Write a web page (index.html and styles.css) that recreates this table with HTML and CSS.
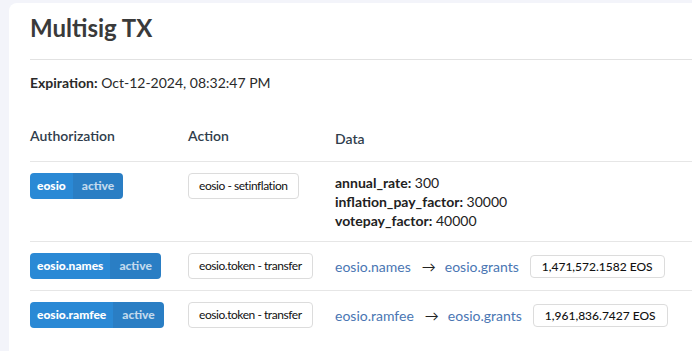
FILE: index.html
```html
<!DOCTYPE html>
<html>
<head>
<meta charset="utf-8">
<link rel="stylesheet" href="styles.css">
</head>
<body>
<div class="card">
  <div class="head">
    <h1 class="title">Multisig TX</h1>
  </div>
  <div class="expiration"><span class="label">Expiration:</span> Oct-12-2024, 08:32:47 PM</div>
  <div class="table">
    <div class="row header-row">
      <div class="th">Authorization</div>
      <div class="th">Action</div>
      <div class="th th-data">Data</div>
    </div>
    <div class="row">
      <div class="cell"><span class="badge"><span class="actor">eosio</span><span class="perm">active</span></span></div>
      <div class="cell"><span class="action">eosio - setinflation</span></div>
      <div class="cell data-lines">
        <div><span class="key">annual_rate:</span> 300</div>
        <div><span class="key">inflation_pay_factor:</span> 30000</div>
        <div><span class="key">votepay_factor:</span> 40000</div>
      </div>
    </div>
    <div class="row">
      <div class="cell"><span class="badge"><span class="actor">eosio.names</span><span class="perm">active</span></span></div>
      <div class="cell"><span class="action">eosio.token - transfer</span></div>
      <div class="cell transfer">
        <a class="link">eosio.names</a><span class="arrow">→</span><a class="link">eosio.grants</a><span class="amount">1,471,572.1582 EOS</span>
      </div>
    </div>
    <div class="row">
      <div class="cell"><span class="badge"><span class="actor">eosio.ramfee</span><span class="perm">active</span></span></div>
      <div class="cell"><span class="action">eosio.token - transfer</span></div>
      <div class="cell transfer">
        <a class="link">eosio.ramfee</a><span class="arrow">→</span><a class="link">eosio.grants</a><span class="amount">1,961,836.7427 EOS</span>
      </div>
    </div>
  </div>
</div>
</body>
</html>
```

FILE: styles.css
```css
* { box-sizing: border-box; }
html, body { margin: 0; padding: 0; }
body {
  background: #f3f4fa;
  font-family: Lato, "Liberation Sans", sans-serif;
  color: #222;
  width: 692px;
  height: 351px;
  overflow: hidden;
}
.card {
  margin: 3px 0 0 9px;
  background: #fff;
  border-radius: 8px 0 0 0;
  padding: 10px 0 20px 21px;
  min-height: 348px;
}
.head {
  border-bottom: 1px solid #e2e2e2;
  padding-bottom: 17px;
}
.title {
  margin: 0;
  font-size: 24px;
  line-height: 29px;
  font-weight: 700;
  color: #3a3a3a;
}
.expiration {
  margin-top: 13px;
  font-size: 14px;
  line-height: 20px;
  color: #2a2a2a;
}
.expiration .label { font-weight: 700; }
.table { margin-top: 33px; }
.row {
  display: grid;
  grid-template-columns: 158px 147px 1fr;
  align-items: start;
  padding: 11px 0;
  border-bottom: 1px solid #e6e6e6;
}
.row:last-child { border-bottom: none; }
.header-row {
  padding: 0 0 12px;
}
.th {
  font-size: 14px;
  line-height: 20px;
  font-weight: 600;
  color: #2f3d4c;
}
.th-data { padding-top: 3px; }
.badge {
  display: inline-flex;
  height: 26px;
  border-radius: 4px;
  overflow: hidden;
  font-size: 12px;
  font-weight: 900;
  line-height: 26px;
}
.actor {
  background: #2a89d5;
  color: #fff;
  padding: 0 7px 0 7px;
}
.perm {
  background: #2a7ec4;
  color: rgba(255,255,255,0.72);
  padding: 0 9px 0 9px;
}
.action {
  display: inline-block;
  height: 26px;
  line-height: 24px;
  border: 1px solid #dcdcdc;
  border-radius: 4px;
  padding: 0 10px;
  font-size: 12px;
  letter-spacing: -0.45px;
  color: #111;
  background: #fff;
}
.data-lines {
  font-size: 14px;
  line-height: 19px;
  color: #222;
}
.key { font-weight: 700; }
.transfer {
  display: flex;
  align-items: center;
  height: 26px;
  font-size: 14px;
}
.link { color: #4a76b3; text-decoration: none; }
.arrow {
  color: #222;
  margin: 0 9px 0 11px;
  font-size: 14px;
}
.amount {
  margin-left: 11px;
  display: inline-block;
  height: 23px;
  line-height: 21px;
  border: 1px solid #dcdcdc;
  border-radius: 4px;
  padding: 0 11px;
  font-size: 12px;
  font-weight: 500;
  color: #111;
}
```
